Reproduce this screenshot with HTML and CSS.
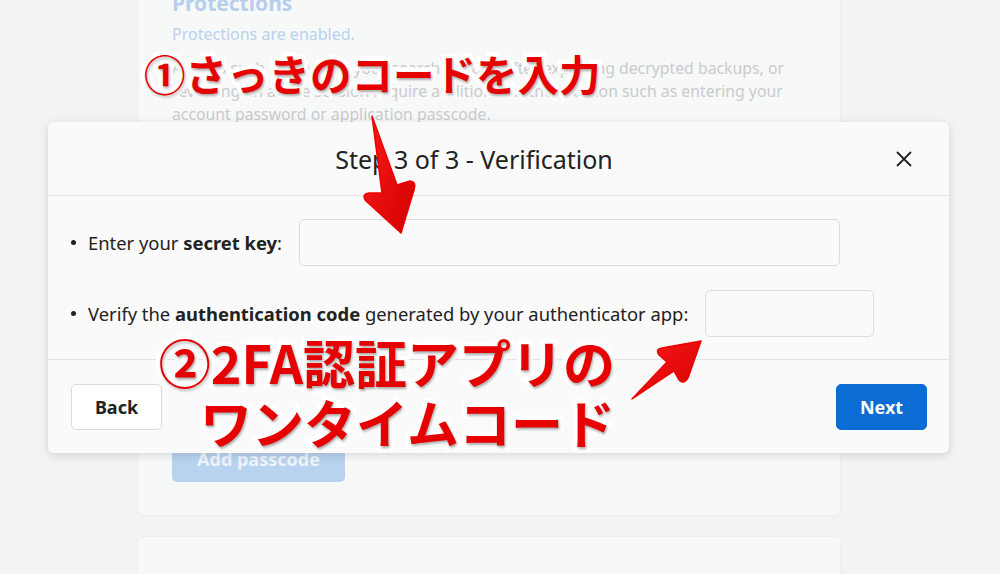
FILE: index.html
```html
<!DOCTYPE html>
<html lang="en">

<head>
    <meta charset="UTF-8">
    <meta name="viewport" content="width=device-width, initial-scale=1.0">
    <title>Step 3 of 3 - Verification</title>
    <link rel="stylesheet" href="styles.css">
</head>

<body>
    <main class="page">
        <section class="card">
            <h2 class="card-title">Protections</h2>
            <p class="card-status">Protections are enabled.</p>
            <p class="card-text">
                Actions such as clearing your search history, after exporting decrypted backups, or<br>
                revealing an active session require additional authentication such as entering your<br>
                account password or application passcode.
            </p>
            <button class="btn-faded">Add passcode</button>
        </section>
        <section class="card card-empty"></section>
    </main>

    <div class="modal">
        <div class="modal-header">
            <h3 class="modal-title">Step 3 of 3 - Verification</h3>
            <button class="modal-close" aria-label="Close">
                <svg width="18" height="18" viewBox="0 0 18 18">
                    <path d="M2 2 L16 16 M16 2 L2 16" stroke="#222" stroke-width="1.8" fill="none" />
                </svg>
            </button>
        </div>
        <ul class="modal-body">
            <li class="step-row">
                <span>Enter your <b>secret key</b>:</span>
                <input class="field field-key" type="text">
            </li>
            <li class="step-row">
                <span>Verify the <b>authentication code</b> generated by your authenticator app:</span>
                <input class="field field-code" type="text">
            </li>
        </ul>
        <div class="modal-footer">
            <button class="btn btn-back">Back</button>
            <button class="btn btn-next">Next</button>
        </div>
    </div>

    <!-- annotations -->
    <div class="note note-first">①さっきのコードを入力</div>
    <div class="note note-second">②2FA認証アプリの<br>ワンタイムコード</div>
    <svg class="arrows" width="1000" height="574" viewBox="0 0 1000 574">
        <defs>
            <linearGradient id="red" x1="0" y1="0" x2="1" y2="1">
                <stop offset="0" stop-color="#ff1a1a" />
                <stop offset="1" stop-color="#d10000" />
            </linearGradient>
        </defs>
        <path d="M372 116 L397 185 L410 181 Q417 182 414 190 L401 233 L366 201 Q361 194 369 193 L382 193 Z"
            fill="url(#red)" stroke="#e00" stroke-width="1.5" stroke-linejoin="round" />
        <path d="M632 399 L667 362 L659 355 Q655 349 662 348 L701 341 L688 378 Q684 385 679 380 L674 371 Z"
            fill="url(#red)" stroke="#e00" stroke-width="1.5" stroke-linejoin="round" />
    </svg>
</body>

</html>
```

FILE: styles.css
```css
html,
body {
    margin: 0;
    padding: 0;
    height: 574px;
    overflow: hidden;
}

body {
    font-family: "Noto Sans", "Open Sans", sans-serif;
    background-color: #f2f3f5;
    position: relative;
}

.page {
    padding-left: 137px;
    width: 704px;
}

.card {
    background: #f7f8f8;
    border: 1px solid #eceef0;
    border-radius: 6px;
    padding: 29px 34px 33px;
    margin-top: -41px;
}

.card-empty {
    margin-top: 20px;
    height: 0;
}

.card-title {
    margin: 0;
    font-size: 21px;
    line-height: 28px;
    font-weight: 700;
    color: #b6cfec;
}

.card-status {
    margin: 6px 0 0;
    font-size: 16px;
    line-height: 23px;
    color: #bad2ee;
}

.card-text {
    margin: 11px 0 0;
    font-size: 15.8px;
    line-height: 23px;
    color: #c9cbcd;
    white-space: nowrap;
}

.btn-faded {
    margin-top: 310px;
    width: 173px;
    height: 46px;
    border: none;
    border-radius: 5px;
    background: #b8d3ef;
    color: #eef4fb;
    font-family: inherit;
    font-size: 18px;
    font-weight: 700;
}

/* modal */

.modal {
    position: absolute;
    left: 48px;
    top: 122px;
    width: 901px;
    background: #fafafa;
    border-radius: 6px;
    box-shadow: 0 2px 10px rgba(0, 0, 0, 0.14);
}

.modal-header {
    height: 73px;
    display: flex;
    align-items: center;
    position: relative;
    border-bottom: 1px solid #e1e2e3;
}

.modal-title {
    flex: 1;
    margin: 0 49px 0 0;
    text-align: center;
    font-size: 25px;
    font-weight: 400;
    color: #222;
}

.modal-close {
    position: absolute;
    right: 36px;
    top: 28px;
    width: 18px;
    height: 18px;
    padding: 0;
    border: none;
    background: none;
}

.modal-close svg {
    display: block;
}

.modal-body {
    list-style: none;
    margin: 0;
    padding: 23px 23px 22px;
    display: flex;
    flex-direction: column;
    gap: 24px;
    border-bottom: 1px solid #e1e2e3;
}

.step-row {
    display: flex;
    align-items: center;
    gap: 17px;
    font-size: 18.4px;
    color: #222;
}

.step-row::before {
    content: "";
    width: 5px;
    height: 5px;
    border-radius: 50%;
    background: #222;
    margin: 0 -5px 0 0;
}

.step-row b {
    font-weight: 700;
}

.field {
    height: 47px;
    box-sizing: border-box;
    border: 1px solid #dcdddf;
    border-radius: 5px;
    background: #fafafa;
}

.field-key {
    width: 541px;
}

.field-code {
    width: 169px;
}

.modal-footer {
    display: flex;
    justify-content: space-between;
    padding: 24px 22px 23px 23px;
}

.btn {
    width: 91px;
    height: 46px;
    border-radius: 5px;
    font-family: inherit;
    font-size: 18px;
    font-weight: 700;
}

.btn-back {
    background: #fff;
    border: 1px solid #d9dadc;
    color: #222;
}

.btn-next {
    background: #0b6cd4;
    border: 1px solid #0b6cd4;
    color: #fff;
}

/* annotations */

.note {
    position: absolute;
    font-family: "Noto Sans CJK JP", sans-serif;
    font-weight: 700;
    color: #e60000;
    -webkit-text-stroke: 9px #fff;
    paint-order: stroke fill;
    text-shadow: 1px 2px 3px rgba(0, 0, 0, 0.35);
    white-space: nowrap;
}

.note-first {
    left: 144px;
    top: 43px;
    font-size: 41.5px;
    line-height: 60px;
}

.note-second {
    left: 143px;
    top: 332px;
    width: 472px;
    text-align: right;
    font-size: 52px;
    line-height: 60px;
}

.arrows {
    position: absolute;
    left: 0;
    top: 0;
    pointer-events: none;
}
```
